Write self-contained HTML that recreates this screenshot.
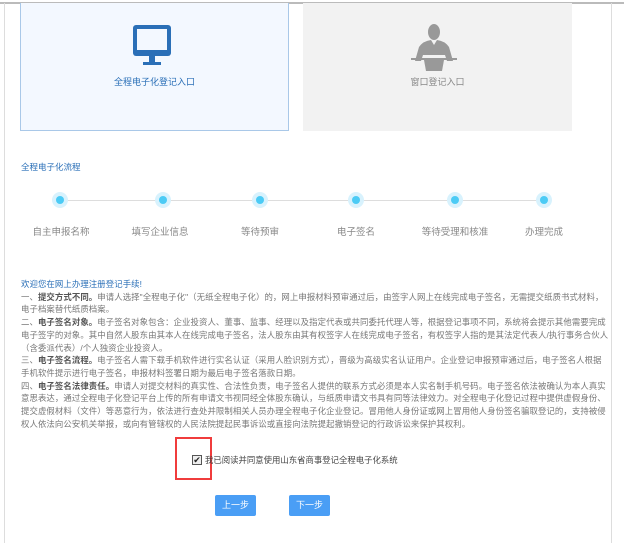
<!DOCTYPE html>
<html><head><meta charset="utf-8"><style>
*{margin:0;padding:0;box-sizing:border-box}
body{width:624px;height:543px;background:#fff;font-family:"Liberation Sans","Noto Sans CJK SC",sans-serif;position:relative;overflow:hidden}
.abs{position:absolute}
.topline{left:0;top:2px;width:624px;height:2px;background:#bbb}
.lb{left:4px;top:3px;width:1px;height:540px;background:#ddd}
.rb{left:611px;top:3px;width:1px;height:540px;background:#ddd}
.card1{left:20px;top:3px;width:269px;height:128px;background:#f3f8ff;border:1px solid #a9c8e8;border-top:none}
.card2{left:303px;top:3px;width:269px;height:128px;background:#f2f2f2}
.ct{font-size:9px;width:100%;text-align:center;top:72px}
.steps .dot{width:16px;height:16px;border-radius:50%;background:#d8f2fd;top:192px}
.steps .dot:after{content:"";position:absolute;left:4px;top:4px;width:8px;height:8px;border-radius:50%;background:#4ccbf5}
.lab{top:224px;font-size:9.5px;color:#888;width:90px;text-align:center}
.txt{left:21px;top:278px;width:600px;font-size:8.4px;line-height:12.7px;color:#777;letter-spacing:0.1px;white-space:nowrap}
.txt b{color:#555}
.btn{top:495px;width:41px;height:21px;background:#4a9ef5;color:#fff;font-size:9px;text-align:center;line-height:21px;border-radius:2px}
</style></head><body>
<div class="abs topline"></div><div class="abs lb"></div><div class="abs rb"></div>
<div class="abs card1">
<svg class="abs" style="left:112px;top:22px" width="38" height="42" viewBox="0 0 38 42"><rect x="0" y="0" width="38" height="31" rx="3" fill="#2a6fb7"/><rect x="4" y="4" width="30" height="21" fill="#f3f8ff"/><rect x="16" y="31" width="6" height="6" fill="#2a6fb7"/><rect x="10" y="37" width="18" height="3" fill="#2a6fb7"/></svg>
<div class="abs ct" style="color:#2a6fb7">全程电子化登记入口</div></div>
<div class="abs card2">
<svg class="abs" style="left:108px;top:20px" width="46" height="50" viewBox="0 0 46 50"><ellipse cx="23" cy="9" rx="6" ry="8" fill="#999"/><path d="M8 24 Q12 18 20 17 L23 22 L26 17 Q34 18 38 24 L42 38 L36 38 L34 32 L12 32 L10 38 L4 38 Z" fill="#999"/><rect x="0" y="35" width="46" height="2" fill="#999"/><path d="M13 37 L33 37 L31 48 L15 48 Z" fill="#999"/></svg>
<div class="abs ct" style="color:#888">窗口登记入口</div></div>
<div class="abs" style="left:21px;top:161px;font-size:8.5px;color:#2a6fb7">全程电子化流程</div>
<div class="abs" style="left:60px;top:200px;width:485px;height:1px;background:#ddd"></div>
<div class="steps">
<div class="abs dot" style="left:52px"></div><div class="abs dot" style="left:155px"></div><div class="abs dot" style="left:252px"></div><div class="abs dot" style="left:348px"></div><div class="abs dot" style="left:447px"></div><div class="abs dot" style="left:536px"></div>
</div>
<div class="abs lab" style="left:16px">自主申报名称</div><div class="abs lab" style="left:115px">填写企业信息</div><div class="abs lab" style="left:215px">等待预审</div><div class="abs lab" style="left:311px">电子签名</div><div class="abs lab" style="left:410px">等待受理和核准</div><div class="abs lab" style="left:499px">办理完成</div>
<div class="abs txt"><span style="color:#2a6fb7">欢迎您在网上办理注册登记手续!</span><br>
一、<b>提交方式不同。</b>申请人选择"全程电子化"（无纸全程电子化）的，网上申报材料预审通过后，由签字人网上在线完成电子签名，无需提交纸质书式材料，<br>电子档案替代纸质档案。<br>
二、<b>电子签名对象。</b>电子签名对象包含：企业投资人、董事、监事、经理以及指定代表或共同委托代理人等，根据登记事项不同，系统将会提示其他需要完成<br>电子签字的对象。其中自然人股东由其本人在线完成电子签名，法人股东由其有权签字人在线完成电子签名，有权签字人指的是其法定代表人/执行事务合伙人<br>（含委派代表）/个人独资企业投资人。<br>
三、<b>电子签名流程。</b>电子签名人需下载手机软件进行实名认证（采用人脸识别方式），晋级为高级实名认证用户。企业登记申报预审通过后，电子签名人根据<br>手机软件提示进行电子签名，申报材料签署日期为最后电子签名落款日期。<br>
四、<b>电子签名法律责任。</b>申请人对提交材料的真实性、合法性负责，电子签名人提供的联系方式必须是本人实名制手机号码。电子签名依法被确认为本人真实<br>意思表达，通过全程电子化登记平台上传的所有申请文书视同经全体股东确认，与纸质申请文书具有同等法律效力。对全程电子化登记过程中提供虚假身份、<br>提交虚假材料（文件）等恶意行为，依法进行查处并限制相关人员办理全程电子化企业登记。冒用他人身份证或网上冒用他人身份签名骗取登记的，支持被侵<br>权人依法向公安机关举报，或向有管辖权的人民法院提起民事诉讼或直接向法院提起撤销登记的行政诉讼来保护其权利。</div>
<div class="abs" style="left:175px;top:437px;width:37px;height:43px;border:2px solid #f03c3c"></div>
<div class="abs" style="left:192px;top:455px;width:10px;height:10px;border:1px solid #555;background:#eee;font-size:9px;line-height:9px;text-align:center;color:#222">✔</div>
<div class="abs" style="left:205px;top:454px;font-size:8.4px;color:#444">我已阅读并同意使用山东省商事登记全程电子化系统</div>
<div class="abs btn" style="left:215px">上一步</div>
<div class="abs btn" style="left:289px">下一步</div>
</body></html>
